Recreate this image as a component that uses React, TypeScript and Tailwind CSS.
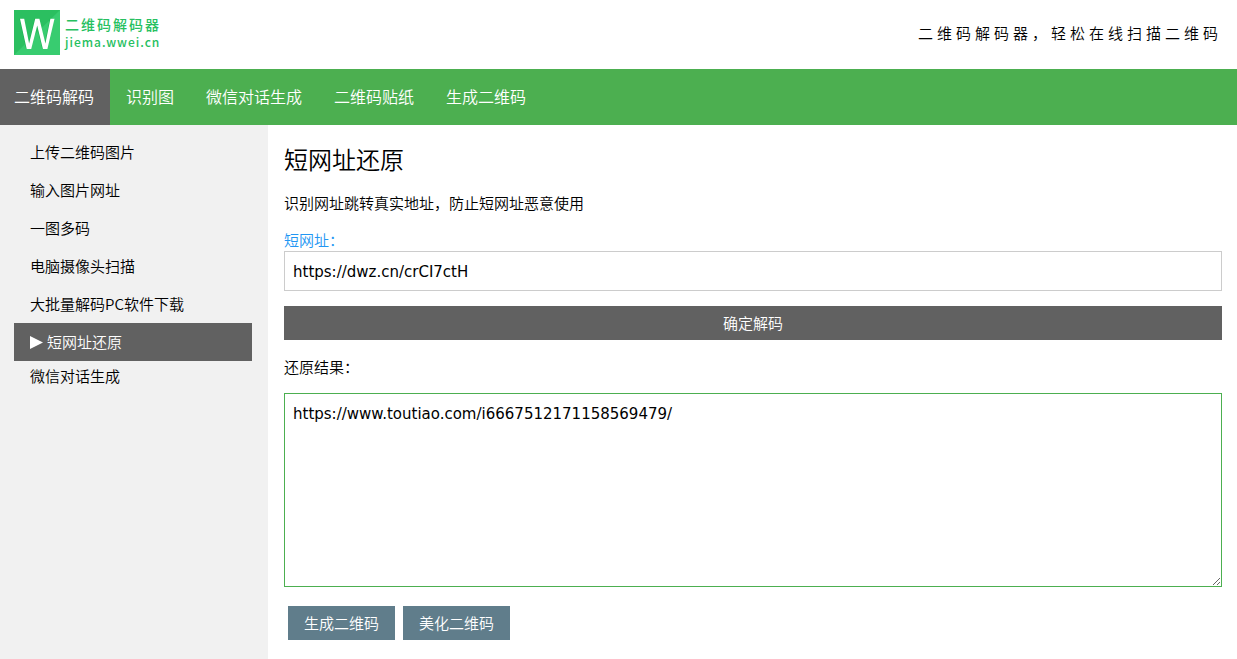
import { useState } from 'react';

const navItems = ['二维码解码', '识别图', '微信对话生成', '二维码贴纸', '生成二维码'];

const sideItems = [
  '上传二维码图片',
  '输入图片网址',
  '一图多码',
  '电脑摄像头扫描',
  '大批量解码PC软件下载',
  '短网址还原',
  '微信对话生成',
];

function Logo() {
  return (
    <a href="#home" className="flex items-center gap-[5px] text-[#27c05f]">
      <svg className="h-[45px] w-[46px]" viewBox="0 0 46 45" aria-hidden="true">
        <rect width="46" height="45" fill="#2bbf60" />
        <path d="M46 0V45H0Z" fill="#38cc70" />
        <path
          d="M5.4 8.7H9.6L14.5 33.5L20.6 8.7H24.8L30.8 33.5L35.8 8.7H39.9L32.8 39H28.3L22.6 15.5L16.6 39H12.1Z"
          fill="#1cb352"
        />
        <path
          d="M6 8.7H10.2L15.1 33.5L21.2 8.7H25.4L31.4 33.5L36.4 8.7H40.5L33.4 39H28.9L23.2 15.5L17.2 39H12.7Z"
          fill="#fff"
        />
      </svg>
      <span className="flex flex-col font-medium">
        <span className="text-sm leading-[18px] tracking-[2px]">二维码解码器</span>
        <span className="text-xs leading-[18px] tracking-[1px]">jiema.wwei.cn</span>
      </span>
    </a>
  );
}

export default function App() {
  const [url, setUrl] = useState('https://dwz.cn/crCI7ctH');
  const [result, setResult] = useState('https://www.toutiao.com/i6667512171158569479/');

  return (
    <div className="flex min-h-screen flex-col bg-white font-['Noto_Sans_CJK_SC',sans-serif] text-[15px] leading-[22px] font-[350] text-black">
      <header className="flex h-[69px] items-center justify-between pr-[15px] pb-1 pl-3.5">
        <Logo />
        <p className="tracking-[4px]">二维码解码器，轻松在线扫描二维码</p>
      </header>

      <nav className="flex bg-[#4caf50] text-base leading-6 text-white">
        {navItems.map((item, i) => (
          <a
            key={item}
            href="#nav"
            className={
              i === 0 ? 'bg-[#616161] pt-[15px] pr-4 pb-[17px] pl-3.5' : 'px-4 pt-[15px] pb-[17px]'
            }
          >
            {item}
          </a>
        ))}
      </nav>

      <div className="flex grow">
        <aside className="w-[268px] shrink-0 bg-[#f1f1f1] pt-2 pr-4 pl-3.5">
          <ul>
            {sideItems.map((item, i) => (
              <li key={item}>
                <a
                  href="#tool"
                  className={
                    i === 5
                      ? 'flex items-center gap-1 bg-[#616161] px-4 py-2 text-white'
                      : i === 6
                        ? 'block px-4 py-1'
                        : 'block px-4 py-2'
                  }
                >
                  {i === 5 && (
                    <svg className="h-[13px] w-[13px]" viewBox="0 0 13 13" aria-hidden="true">
                      <path d="M0 0L13 6.5L0 13Z" fill="currentColor" />
                    </svg>
                  )}
                  {item}
                </a>
              </li>
            ))}
          </ul>
        </aside>

        <main className="min-w-0 grow pt-4 pr-[15px] pb-4 pl-4">
          <h1 className="text-2xl leading-9 font-[350]">短网址还原</h1>
          <p className="mt-[15px]">识别网址跳转真实地址，防止短网址恶意使用</p>
          <form onSubmit={(e) => e.preventDefault()}>
            <label htmlFor="short-url" className="mt-[15px] block text-[#2196f3]">
              短网址：
            </label>
            <input
              id="short-url"
              type="text"
              value={url}
              onChange={(e) => setUrl(e.target.value)}
              className="block h-10 w-full border border-[#ccc] px-2 pt-0.5 font-['DejaVu_Sans',sans-serif] font-normal"
            />
            <button type="submit" className="mt-[15px] block h-[34px] w-full bg-[#616161] text-white">
              确定解码
            </button>
            <label htmlFor="result" className="mt-4 block">
              还原结果：
            </label>
            <textarea
              id="result"
              value={result}
              onChange={(e) => setResult(e.target.value)}
              className="mt-[15px] block h-[194px] w-full border border-[#4caf50] p-2 font-['DejaVu_Sans',sans-serif] leading-6 font-normal"
            />
            <div className="mt-[19px] flex gap-2 pl-1 text-white">
              <button type="button" className="h-[34px] bg-[#607d8b] px-4">
                生成二维码
              </button>
              <button type="button" className="h-[34px] bg-[#607d8b] px-4">
                美化二维码
              </button>
            </div>
          </form>
        </main>
      </div>
    </div>
  );
}
